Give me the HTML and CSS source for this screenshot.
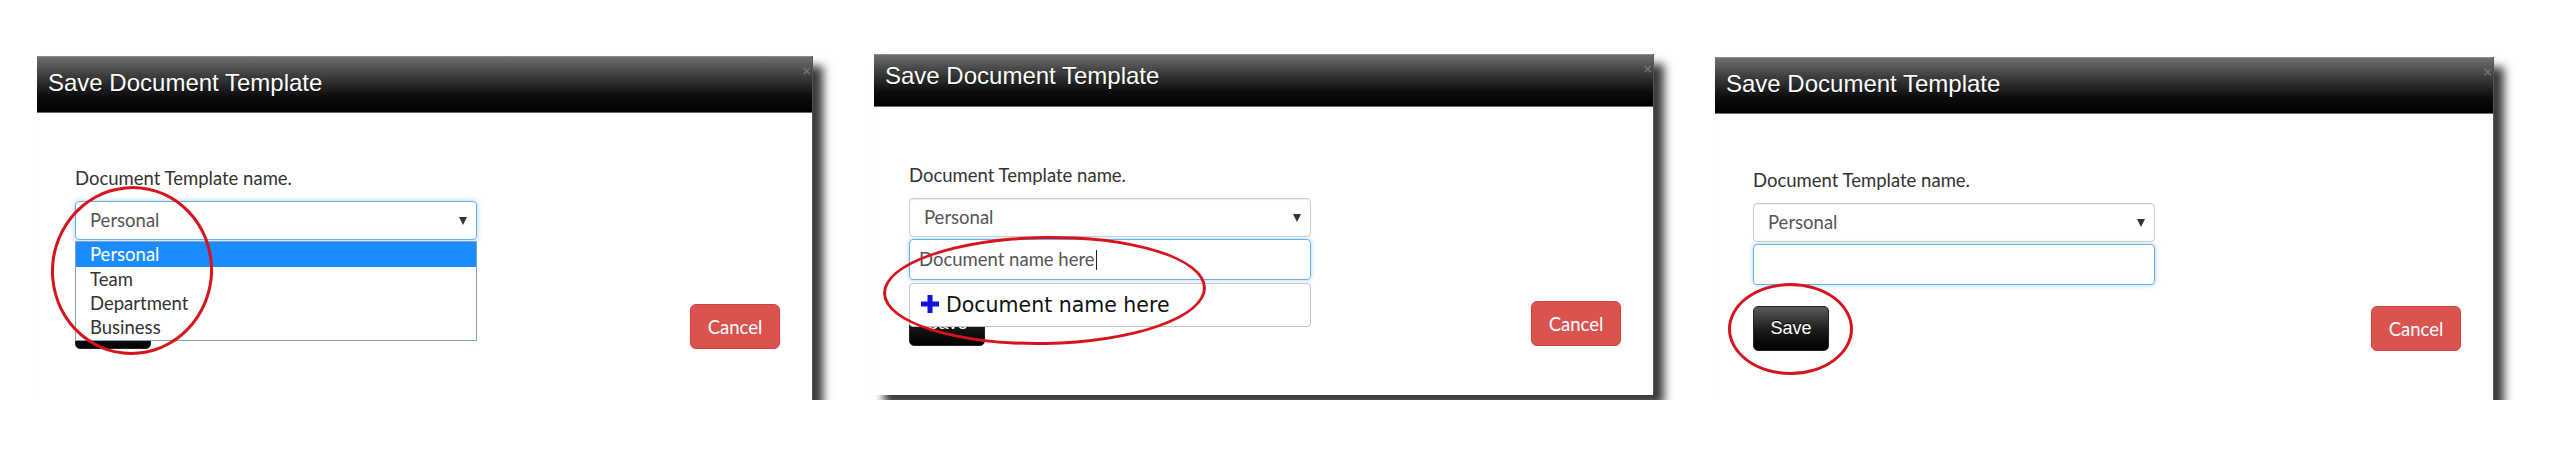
FILE: index.html
```html
<!DOCTYPE html>
<html lang="en">

<head>
    <meta charset="UTF-8">
    <title>Save Document Template</title>
    <link rel="stylesheet" href="styles.css">
</head>

<body>

    <div class="board">

        <!-- step 1: pick the template type -->
        <div class="dialog dialog-first">
            <div class="dialog-header">
                <h2>Save Document Template</h2>
                <span class="close">&times;</span>
            </div>
            <div class="dialog-body">
                <label class="field-label">Document Template name.</label>
                <div class="field">
                    <div class="select select-focus">Personal<span class="caret"></span></div>
                    <div class="text-input"></div>
                    <ul class="option-list">
                        <li class="selected">Personal</li>
                        <li>Team</li>
                        <li>Department</li>
                        <li>Business</li>
                    </ul>
                </div>
                <div class="actions">
                    <button class="btn btn-save">Save</button>
                    <button class="btn btn-cancel">Cancel</button>
                </div>
            </div>
            <div class="mark mark-first"></div>
        </div>

        <!-- step 2: type a name -->
        <div class="dialog dialog-second">
            <div class="dialog-header">
                <h2>Save Document Template</h2>
                <span class="close">&times;</span>
            </div>
            <div class="dialog-body">
                <label class="field-label">Document Template name.</label>
                <div class="field">
                    <div class="select">Personal<span class="caret"></span></div>
                    <div class="text-input input-focus">Document name here<span class="cursor"></span></div>
                    <div class="suggest">
                        <svg class="plus" width="18" height="18" viewBox="0 0 18 18">
                            <rect x="0" y="6.5" width="18" height="5" fill="#1212d6" />
                            <rect x="6.5" y="0" width="5" height="18" fill="#1212d6" />
                        </svg>
                        <span>Document name here</span>
                    </div>
                </div>
                <div class="actions">
                    <button class="btn btn-save">Save</button>
                    <button class="btn btn-cancel">Cancel</button>
                </div>
            </div>
            <div class="mark mark-second"></div>
        </div>

        <!-- step 3: save it -->
        <div class="dialog dialog-third">
            <div class="dialog-header">
                <h2>Save Document Template</h2>
                <span class="close">&times;</span>
            </div>
            <div class="dialog-body">
                <label class="field-label">Document Template name.</label>
                <div class="field">
                    <div class="select">Personal<span class="caret"></span></div>
                    <div class="text-input input-focus"></div>
                </div>
                <div class="actions">
                    <button class="btn btn-save">Save</button>
                    <button class="btn btn-cancel">Cancel</button>
                </div>
            </div>
            <div class="mark mark-third"></div>
        </div>

    </div>

</body>

</html>
```

FILE: styles.css
```css
* {
    margin: 0;
    padding: 0;
    box-sizing: border-box;
}

body {
    background-color: #fff;
    font-family: 'Lato', 'Liberation Sans', sans-serif;
    color: #333;
}

.board {
    display: flex;
    align-items: flex-start;
    gap: 62px;
    padding: 54px 0 0 37px;
}

.dialog {
    position: relative;
    display: flex;
    flex-direction: column;
    width: 776px;
    height: 344px;
    background-color: #fff;
    border-right: 1px solid #555;
    box-shadow: 10px 10px 9px rgba(0, 0, 0, 0.78);
}

.dialog-first {
    margin-top: 2px;
}

.dialog-second {
    width: 780px;
    height: 341px;
}

.dialog-third {
    margin-top: 3px;
    width: 779px;
    height: 343px;
}

.dialog + .dialog {
    margin-left: -1px;
}

.dialog-header {
    position: relative;
    height: 57px;
    padding: 12px 0 0 11px;
    background: linear-gradient(#6e6e6e 0%, #3c3c3c 35%, #0c0c0c 72%, #000 100%);
    border-top: 1px solid #8a8a8a;
    border-bottom: 1px solid #6a6a6a;
}

.dialog-second .dialog-header {
    height: 53px;
    padding-top: 7px;
}

.dialog-header h2 {
    font-family: 'Liberation Sans', Arial, sans-serif;
    font-weight: normal;
    font-size: 24px;
    color: #fff;
    text-shadow: 0 1px 1px rgba(0, 0, 0, 0.5);
}

.close {
    position: absolute;
    top: 6px;
    right: 1px;
    font-family: 'Liberation Sans', Arial, sans-serif;
    font-size: 15px;
    font-weight: bold;
    line-height: 15px;
    color: #6e6e6e;
}

.dialog-body {
    position: relative;
    flex: 1;
    display: flex;
    flex-direction: column;
    padding: 54px 32px 0 38px;
}

.dialog-second .dialog-body {
    padding-top: 57px;
    padding-left: 35px;
}

.dialog-third .dialog-body {
    padding-top: 55px;
}

.field-label {
    font-size: 18.5px;
    line-height: 22px;
    color: #333;
    margin-bottom: 12px;
}

.field {
    position: relative;
    width: 402px;
}

.select {
    position: relative;
    height: 39px;
    padding: 0 14px;
    line-height: 37px;
    font-size: 18.5px;
    color: #555;
    border: 1px solid #ccc;
    border-radius: 4px;
    box-shadow: inset 0 1px 1px rgba(0, 0, 0, 0.075);
}

.select-focus {
    border-color: #66afe9;
    box-shadow: 0 0 5px rgba(102, 175, 233, 0.6);
}

.caret {
    position: absolute;
    right: 9px;
    top: 15px;
    border-left: 4px solid transparent;
    border-right: 4px solid transparent;
    border-top: 8px solid #333;
}

.text-input {
    height: 41px;
    margin-top: 2px;
    padding: 0 9px;
    line-height: 39px;
    font-size: 18.5px;
    color: #555;
    border: 1px solid #ccc;
    border-radius: 4px;
}

.input-focus {
    border-color: #66afe9;
    box-shadow: 0 0 5px rgba(102, 175, 233, 0.55);
}

.cursor {
    display: inline-block;
    width: 1px;
    height: 20px;
    margin-left: 1px;
    vertical-align: -4px;
    background-color: #222;
}

.option-list {
    position: absolute;
    top: 40px;
    left: 0;
    width: 402px;
    z-index: 2;
    list-style: none;
    background-color: #fff;
    border: 1px solid #7ba3d0;
    padding-bottom: 1px;
}

.option-list li {
    height: 24px;
    line-height: 24px;
    padding-left: 14px;
    font-size: 18.5px;
    color: #333;
}

.option-list .selected {
    height: 25px;
    background-color: #1a8cff;
    color: #fff;
}

.suggest {
    position: absolute;
    top: 85px;
    left: 0;
    width: 402px;
    height: 44px;
    z-index: 2;
    display: flex;
    align-items: center;
    gap: 7px;
    padding-left: 11px;
    background-color: #fff;
    border: 1px solid #c4c4c4;
    border-radius: 4px;
    font-family: 'DejaVu Sans', sans-serif;
    font-size: 20.5px;
    color: #111;
}

.plus {
    flex-shrink: 0;
    margin-top: -2px;
}

.actions {
    display: flex;
    justify-content: space-between;
    margin-top: 21px;
}

.btn {
    height: 45px;
    border-radius: 5px;
    font-size: 18px;
    color: #fff;
    cursor: pointer;
}

.btn-save {
    width: 76px;
    font-family: 'Liberation Sans', Arial, sans-serif;
    background: linear-gradient(#5a5a5a, #1a1a1a 55%, #000);
    border: 1px solid #222;
    text-shadow: 0 -1px 0 #000;
}

.btn-cancel {
    width: 90px;
    font-family: 'Lato', sans-serif;
    font-size: 18.5px;
    background-color: #d9534f;
    border: 1px solid #d43f3a;
    border-radius: 6px;
}

.mark {
    position: absolute;
    z-index: 5;
    border: 3px solid #d7141e;
    border-radius: 50%;
    pointer-events: none;
}

.mark-first {
    left: 14px;
    top: 130px;
    width: 162px;
    height: 169px;
    transform: rotate(6deg);
}

.mark-second {
    left: 9px;
    top: 182px;
    width: 323px;
    height: 109px;
    transform: rotate(-1deg);
}

.mark-third {
    left: 13px;
    top: 226px;
    width: 125px;
    height: 92px;
}
```
